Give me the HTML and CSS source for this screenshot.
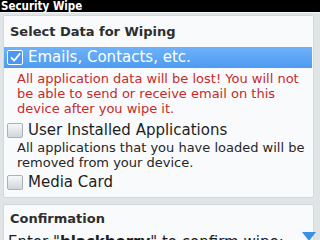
FILE: index.html
```html
<!DOCTYPE html>
<html>
<head>
<meta charset="utf-8">
<link rel="stylesheet" href="styles.css">
</head>
<body>
<div class="titlebar">Security Wipe</div>
<div class="panel panel-data">
  <div class="heading">Select Data for Wiping</div>
  <div class="row selected">
    <span class="box checked"><svg width="13" height="13" viewBox="0 0 13 13"><path d="M2.5 6.8 L5.2 9.6 L10.8 2.8" fill="none" stroke="#fff" stroke-width="1.8" stroke-linecap="round" stroke-linejoin="round"/></svg></span>
    <span class="label">Emails, Contacts, etc.</span>
  </div>
  <div class="desc warn">All application data will be lost! You will not be able to send or receive email on this device after you wipe it.</div>
  <div class="row">
    <span class="box"></span>
    <span class="label">User Installed Applications</span>
  </div>
  <div class="desc info">All applications that you have loaded will be removed from your device.</div>
  <div class="row">
    <span class="box"></span>
    <span class="label">Media Card</span>
  </div>
</div>
<div class="panel panel-confirm">
  <div class="heading">Confirmation</div>
  <div class="enter">Enter "<b>blackberry</b>" to confirm wipe:</div>
</div>
<div class="scroll-arrow"></div>
</body>
</html>
```
FILE: styles.css
```css
html, body {
  margin: 0;
  padding: 0;
}
body {
  width: 320px;
  height: 240px;
  overflow: hidden;
  background: #dfe4e7;
  font-family: "DejaVu Sans", sans-serif;
  color: #222;
  position: relative;
}
.titlebar {
  height: 12px;
  background: #000;
  color: #fff;
  font-family: "DejaVu Sans Condensed", "DejaVu Sans", sans-serif;
  font-weight: bold;
  font-size: 11.5px;
  line-height: 12px;
  padding-left: 1px;
  border-bottom: 1px solid #f2f4f5;
}
.panel {
  margin: 2px 6px 0 3px;
  background: #f9fafb;
  border: 1px solid #d2d8dc;
  border-radius: 2px;
}
.panel-data {
  padding-bottom: 5px;
}
.heading {
  font-weight: bold;
  font-size: 13px;
  line-height: 16px;
  color: #2e2e2e;
  padding: 8px 0 0 6px;
  height: 23px;
}
.row {
  display: flex;
  align-items: center;
  height: 19px;
  line-height: 19px;
  font-size: 15px;
  color: #1e1e1e;
  padding-left: 3px;
}
.row.selected {
  height: 21px;
  line-height: 21px;
  margin: 0 1px 0 0;
  background: linear-gradient(#6eb2fa, #4d9bf0);
  color: #fff;
  padding-left: 3px;
}
.box {
  width: 14px;
  height: 13px;
  border: 1px solid #a9b1b8;
  border-radius: 2px;
  background: linear-gradient(#f6f8fa, #cfd6dc);
  flex: none;
  margin-right: 5px;
  display: flex;
  align-items: center;
  justify-content: center;
}
.box.checked {
  border-color: #fff;
  background: #4a97ee;
}
.label {
  white-space: nowrap;
}
.desc {
  font-size: 13px;
  line-height: 15px;
  padding-left: 13px;
  padding-right: 4px;
  color: #262626;
}
.warn {
  color: #c62a2c;
  margin-top: 3px;
  margin-bottom: 5px;
}
.info {
  margin-bottom: 3px;
}
.panel-confirm {
  margin-top: 6px;
  height: 60px;
}
.panel-confirm .heading {
  padding-top: 6px;
  height: 16px;
}
.enter {
  font-size: 15px;
  line-height: 21px;
  margin-top: 5px;
  padding-left: 4px;
  white-space: nowrap;
  color: #1e1e1e;
}
.scroll-arrow {
  position: absolute;
  left: 302px;
  top: 232px;
  width: 0;
  height: 0;
  border-left: 7px solid transparent;
  border-right: 7px solid transparent;
  border-top: 9px solid #3c8fe6;
}
```
